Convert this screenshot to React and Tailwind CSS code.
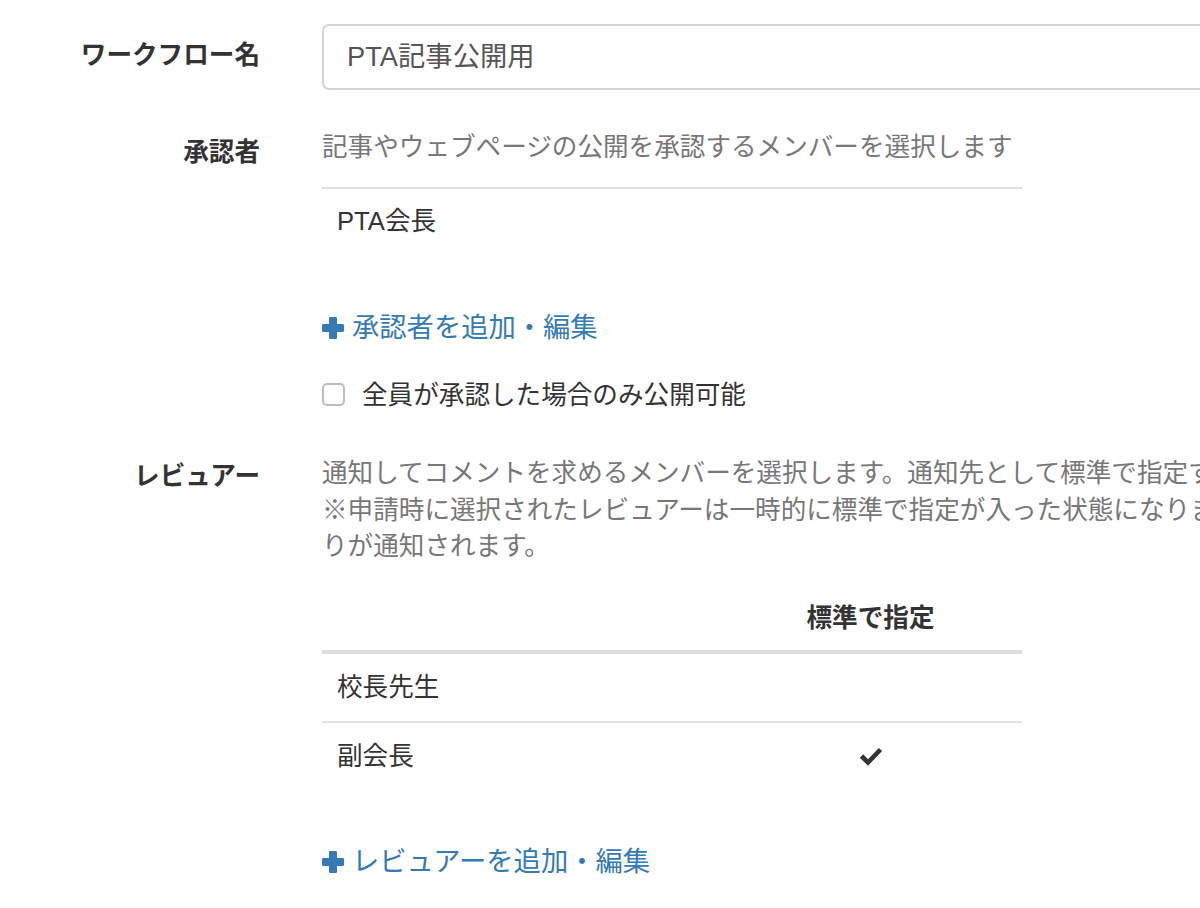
import React from "react";

const Plus = () => (
  <svg width="22" height="22" viewBox="0 0 22 22" className="shrink-0 w-[22px] h-[22px]">
    <rect x="7" y="0" width="8" height="22" rx="1.2" fill="#337ab7" />
    <rect x="0" y="7" width="22" height="8" rx="1.2" fill="#337ab7" />
  </svg>
);

const Check = () => (
  <svg width="24" height="20" viewBox="0 0 24 20">
    <path d="M2.5 10 L9 16.5 L21.5 3.5" fill="none" stroke="#333" strokeWidth="4.6" strokeLinejoin="miter" />
  </svg>
);

export default function App() {
  return (
    <div
      className="w-[1200px] h-[908px] overflow-hidden bg-white text-[#333] text-[25.6px] leading-[36.5px]"
      style={{ fontFamily: '"Liberation Sans", "Noto Sans CJK JP", sans-serif' }}
    >
      <div className="w-[1500px]">
        {/* Row 1 */}
        <div className="grid grid-cols-[260px_1fr] gap-x-[62px] pt-[24px]">
          <div className="text-right font-bold pt-[13px] whitespace-nowrap">ワークフロー名</div>
          <div className="w-[1000px] h-[66px] border-2 border-[#d4d4d4] rounded-[7px] px-[23px] flex items-center text-[#555] text-[27.3px]">
            PTA記事公開用
          </div>
        </div>

        {/* Row 2 */}
        <div className="grid grid-cols-[260px_1fr] gap-x-[62px] mt-[39px]">
          <div className="text-right font-bold pt-[5px]">承認者</div>
          <div>
            <div className="text-[#777] whitespace-nowrap">記事やウェブページの公開を承認するメンバーを選択します</div>
            <div className="w-[700px] mt-[21px] border-t-2 border-[#e2e2e2]">
              <div className="px-[15px] pt-[14px] pb-[14px]">PTA会長</div>
            </div>
            <div className="mt-[57px] flex items-center gap-[8px] text-[#337ab7] text-[27.3px] whitespace-nowrap">
              <Plus />
              <span>承認者を追加・編集</span>
            </div>
            <label className="mt-[30px] flex items-center gap-[17px] whitespace-nowrap">
              <span className="w-[23px] h-[23px] border-2 border-[#bdbdbd] rounded-[5px] bg-white shrink-0" />
              <span>全員が承認した場合のみ公開可能</span>
            </label>
          </div>
        </div>

        {/* Row 3 */}
        <div className="grid grid-cols-[260px_1fr] gap-x-[62px] mt-[42px]">
          <div className="text-right font-bold pt-[3px]">レビュアー</div>
          <div>
            <div className="text-[#777] whitespace-nowrap">
              <div>通知してコメントを求めるメンバーを選択します。通知先として標準で指定すると、そのメンバーに</div>
              <div>※申請時に選択されたレビュアーは一時的に標準で指定が入った状態になります。申請者から選択されたレビュアーへのお知らせが送</div>
              <div>りが通知されます。</div>
            </div>
            <div className="w-[700px] mt-[21px]">
              <div className="grid grid-cols-[397px_303px] border-b-4 border-[#dddddd]">
                <div className="px-[15px] pt-[14px] pb-[14px]"></div>
                <div className="px-[15px] pt-[14px] pb-[14px] text-center font-bold">標準で指定</div>
              </div>
              <div className="grid grid-cols-[397px_303px] border-b-2 border-[#e2e2e2]">
                <div className="px-[15px] pt-[15px] pb-[15px]">校長先生</div>
                <div className="px-[15px] pt-[15px] pb-[15px]"></div>
              </div>
              <div className="grid grid-cols-[397px_303px]">
                <div className="px-[15px] pt-[15px] pb-[15px]">副会長</div>
                <div className="px-[15px] pt-[15px] pb-[15px] flex items-center justify-center">
                  <Check />
                </div>
              </div>
            </div>
            <div className="mt-[55px] flex items-center gap-[8px] text-[#337ab7] text-[27.3px] whitespace-nowrap">
              <Plus />
              <span>レビュアーを追加・編集</span>
            </div>
          </div>
        </div>
      </div>
    </div>
  );
}
